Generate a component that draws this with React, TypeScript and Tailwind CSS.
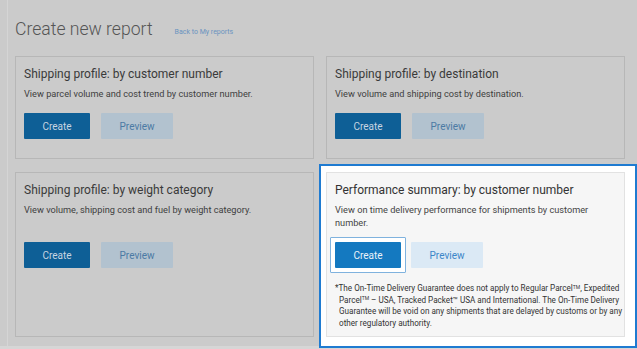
import React from 'react';

const font = { fontFamily: 'Roboto, "Liberation Sans", sans-serif' };

type CardProps = {
  title: string;
  desc: string;
  tall?: boolean;
  active?: boolean;
  children?: React.ReactNode;
};

function Card({ title, desc, tall, active, children }: CardProps) {
  return (
    <div
      className={
        active
          ? 'relative z-10 h-full border border-[#e2e2e2] bg-[#f6f6f6] px-[8px] pt-[9px]'
          : 'h-full border border-[#b7b7b7] bg-[#cbcbcb] px-[8px] pt-[9px]'
      }
    >
      <h2 className={`text-[12px] leading-[16px] ${active ? 'text-[#333]' : 'text-[#3a3a3a]'}`}>{title}</h2>
      <p
        className={`mt-[5px] text-[9.2px] leading-[13px] ${active ? 'text-[#444]' : 'text-[#404040]'} ${tall ? 'min-h-[26px]' : ''}`}
      >
        {desc}
      </p>
      <div className="mt-[13px] flex gap-[11px]">
        {active ? (
          <>
            <div className="-m-[5px] rounded-[1px] border border-[#7fb2de] bg-white p-[4px]">
              <button className="block h-[26px] w-[66px] rounded-[1px] bg-[#1479c0] text-[10px] text-[#eaf2f9]">Create</button>
            </div>
            <button className="-ml-[1px] h-[26px] w-[72px] rounded-[1px] bg-[#dbe9f5] text-[10px] text-[#3b86c8]">Preview</button>
          </>
        ) : (
          <>
            <button className="h-[26px] w-[66px] rounded-[1px] bg-[#0e5f96] text-[10px] text-[#c7d5e1]">Create</button>
            <button className="h-[26px] w-[72px] rounded-[1px] bg-[#b2c2cf] text-[10px] text-[#4b7aa4]">Preview</button>
          </>
        )}
      </div>
      {children}
    </div>
  );
}

export default function App() {
  return (
    <div className="relative h-[349px] w-[637px] overflow-hidden bg-[#cbcbcb]" style={font}>
      <div className="ml-[7px] h-[346px] border-l border-[#d5d5d5] pl-[7px]">
        <div className="flex items-end pt-[18px]">
          <h1 className="text-[17.6px] font-light leading-[22px] text-[#555]">Create new report</h1>
          <a className="mb-[3px] ml-[22px] text-[7px] text-[#6a93c0]">Back to My reports</a>
        </div>
        <div className="mt-[16px] grid w-[610px] grid-cols-[299px_299px] grid-rows-[103px_165px] gap-x-[12px] gap-y-[13px]">
          <Card title="Shipping profile: by customer number" desc="View parcel volume and cost trend by customer number." />
          <Card title="Shipping profile: by destination" desc="View volume and shipping cost by destination." />
          <Card tall title="Shipping profile: by weight category" desc="View volume, shipping cost and fuel by weight category." />
          <div className="relative">
            <div className="absolute -bottom-[11px] -left-[7px] -right-[12px] -top-[8px] border-2 border-[#1f7bd1] bg-white" />
            <Card
              active
              tall
              title="Performance summary: by customer number"
              desc="View on time delivery performance for shipments by customer number."
            >
              <p className="mt-[15px] whitespace-nowrap pl-[4px] -indent-[4px] text-[8.15px] leading-[11.7px] text-[#333]">
                *The On-Time Delivery Guarantee does not apply to Regular Parcel<sup className="text-[5px]">TM</sup>, Expedited
                <br />
                Parcel<sup className="text-[5px]">TM</sup> – USA, Tracked Packet™ USA and International. The On-Time Delivery
                <br />
                Guarantee will be void on any shipments that are delayed by customs or by any
                <br />
                other regulatory authority.
              </p>
            </Card>
          </div>
        </div>
      </div>
      <div className="h-[3px] bg-[#d6d6d6]" />
    </div>
  );
}
